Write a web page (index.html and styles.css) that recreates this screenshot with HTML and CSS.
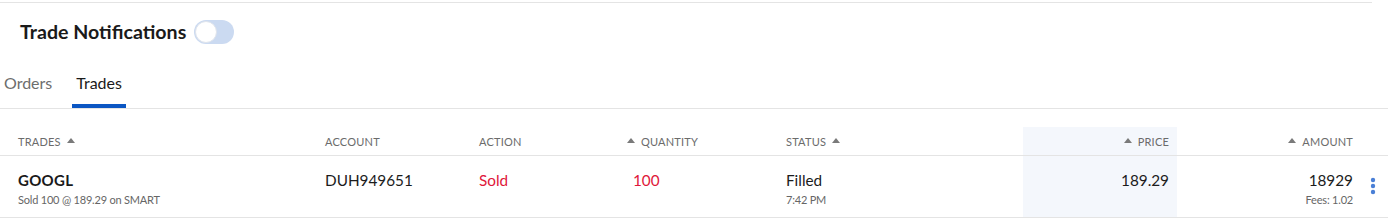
FILE: index.html
```html
<!DOCTYPE html>
<html lang="en">
<head>
<meta charset="utf-8">
<title>Trades</title>
<link rel="stylesheet" href="styles.css">
</head>
<body>
<div class="page">
  <div class="notif">
    <h2 class="notif-title">Trade Notifications</h2>
    <span class="toggle"><span class="knob"></span></span>
  </div>
  <nav class="tabs">
    <span class="tab">Orders</span>
    <span class="tab active">Trades</span>
  </nav>
  <div class="table">
    <div class="row head">
      <div class="cell c-trades">Trades <span class="arrow"></span></div>
      <div class="cell">Account</div>
      <div class="cell">Action</div>
      <div class="cell c-qty"><span class="arrow"></span> Quantity</div>
      <div class="cell">Status <span class="arrow"></span></div>
      <div class="cell right hl"><span class="arrow"></span> Price</div>
      <div class="cell right"><span class="arrow"></span> Amount</div>
      <div class="cell"></div>
    </div>
    <div class="row data">
      <div class="cell c-trades">
        <div class="sym">GOOGL</div>
        <div class="sub">Sold 100 @ 189.29 on SMART</div>
      </div>
      <div class="cell"><div class="main">DUH949651</div></div>
      <div class="cell"><div class="main red">Sold</div></div>
      <div class="cell c-qtyv"><div class="main red">100</div></div>
      <div class="cell">
        <div class="main">Filled</div>
        <div class="sub">7:42 PM</div>
      </div>
      <div class="cell right hl"><div class="main">189.29</div></div>
      <div class="cell right">
        <div class="main">18929</div>
        <div class="sub">Fees: 1.02</div>
      </div>
      <div class="cell kebab">
        <svg width="6" height="18" viewBox="0 0 6 18"><circle cx="3" cy="3" r="2.2" fill="#4a7fd6"/><circle cx="3" cy="9" r="2.2" fill="#4a7fd6"/><circle cx="3" cy="15" r="2.2" fill="#4a7fd6"/></svg>
      </div>
    </div>
  </div>
</div>
</body>
</html>
```
FILE: styles.css
```css
* { box-sizing: border-box; }
body {
  margin: 0;
  background: #fff;
  font-family: Lato, "Open Sans", Arial, sans-serif;
  color: #1c1c1c;
}
.page { padding-top: 2px; }
.notif {
  width: 1372px;
  border-top: 1px solid #e4e4e4;
  display: flex;
  align-items: center;
  gap: 8px;
  padding: 17px 0 0 20px;
}
.notif-title {
  margin: 0;
  font-size: 19.6px;
  line-height: 24px;
  font-weight: 700;
  color: #1a1a1a;
}
.toggle {
  width: 40px;
  height: 24px;
  border-radius: 12px;
  background: #cbdaf1;
  display: flex;
  align-items: center;
  padding-left: 1px;
}
.knob {
  width: 22px;
  height: 22px;
  border-radius: 50%;
  background: #fff;
  border: 1px solid #dfe4ec;
}
.tabs {
  margin-top: 17px;
  width: 1388px;
  border-bottom: 1px solid #e4e4e4;
  display: flex;
  gap: 16px;
}
.tab {
  padding: 12px 4px 11px;
  line-height: 20px;
  font-size: 16px;
  color: #6d6d6d;
  border-bottom: 4px solid transparent;
}
.tab.active {
  color: #1a1a1a;
  border-bottom-color: #0b56c3;
}
.table {
  margin-top: 18px;
  width: 1388px;
}
.row {
  display: grid;
  grid-template-columns: 317px 154px 148px 159px 245px 154px 184px 27px;
  border-bottom: 1px solid #e4e4e4;
}
.row.head { height: 29px; }
.row.data { height: 62px; }
.cell { padding: 0 8px; }
.cell.c-trades { padding-left: 18px; }
.head .cell {
  font-size: 11px;
  text-transform: uppercase;
  color: #6b6b6b;
  letter-spacing: 0.2px;
  display: flex;
  align-items: center;
  gap: 6px;
}
.head .cell.right { justify-content: flex-end; }
.right { text-align: right; }
.hl { background: #f4f7fc; }
.arrow {
  display: inline-block;
  width: 0;
  height: 0;
  border-left: 4px solid transparent;
  border-right: 4px solid transparent;
  border-bottom: 5px solid #7a7a7a;
  margin-top: -2px;
}
.data .cell { padding-top: 14px; }
.data .cell.c-trades { padding-left: 18px; }
.sym {
  font-size: 15px;
  font-weight: 700;
  line-height: 20px;
  color: #1a1a1a;
  letter-spacing: 0.3px;
}
.main {
  font-size: 15.3px;
  line-height: 20px;
  color: #1c1c1c;
}
.red { color: #e0173a; }
.c-qtyv { padding-left: 14px; }
.sub {
  font-size: 11px;
  line-height: 14px;
  color: #666;
  margin-top: 3px;
  letter-spacing: -0.2px;
}
.kebab {
  padding: 21px 0 0 9px !important;
}
.kebab svg { display: block; }
```
